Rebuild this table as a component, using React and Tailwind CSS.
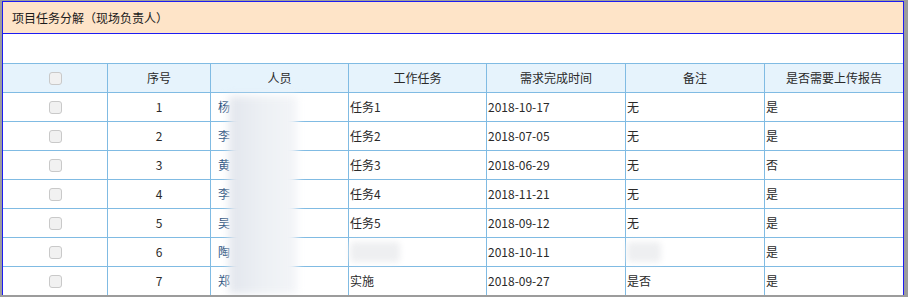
import React from 'react';

const rows = [
  { no: 1, name: '杨', task: '任务1', date: '2018-10-17', note: '无', report: '是' },
  { no: 2, name: '李', task: '任务2', date: '2018-07-05', note: '无', report: '是' },
  { no: 3, name: '黄', task: '任务3', date: '2018-06-29', note: '无', report: '否' },
  { no: 4, name: '李', task: '任务4', date: '2018-11-21', note: '无', report: '是' },
  { no: 5, name: '吴', task: '任务5', date: '2018-09-12', note: '无', report: '是' },
  { no: 6, name: '陶', task: null, date: '2018-10-11', note: null, report: '是' },
  { no: 7, name: '郑', task: '实施', date: '2018-09-27', note: '是否', report: '是' },
];

const headers = ['序号', '人员', '工作任务', '需求完成时间', '备注', '是否需要上传报告'];

const Checkbox = () => (
  <span className="inline-block w-[13px] h-[13px] rounded-[3px] border border-[#c9c9c9] bg-[#f1f1f1]" />
);

// smudge used where the original screenshot was blurred out
const Smudge = ({ w }) => (
  <span className="inline-block h-[20px] rounded-sm bg-[#eeeff1] blur-[3px]" style={{ width: w }} />
);

const cell = 'h-[29px] border-r border-b border-[#80bbe3] flex items-center';

export default function App() {
  return (
    <div className="w-full h-[297px] bg-[#9c9c9c] pt-px pl-[2px] pr-[4px] pb-[2px] flex font-['Noto_Sans_CJK_SC',sans-serif] text-[12px] text-[#2a2a2a]">
      <div className="flex-1 relative overflow-hidden border-x border-t border-[#1c1cf2] bg-white">
        {/* title bar */}
        <div className="h-[32px] bg-[#fee4c8] border-b border-[#1c1cf2] flex items-center pl-[9px] text-[12px] text-[#1a1a1a]">
          项目任务分解（现场负责人）
        </div>

        <div className="h-[29px]" />

        {/* table */}
        <div className="grid grid-cols-[105px_103px_138px_138px_139px_139px_138px] border-t border-[#80bbe3]">
          <div className={`${cell} bg-[#e6f3fc] justify-center`}>
            <Checkbox />
          </div>
          {headers.map((h, i) => (
            <div
              key={h}
              className={`${cell} bg-[#e6f3fc] justify-center ${i === headers.length - 1 ? 'border-r-0' : ''}`}
            >
              {h}
            </div>
          ))}

          {rows.map(r => (
            <React.Fragment key={r.no}>
              <div className={`${cell} justify-center`}>
                <Checkbox />
              </div>
              <div className={`${cell} justify-center`}>{r.no}</div>
              <div className={`${cell} pl-[7px] text-[#1f4f80]`}>{r.name}</div>
              <div className={`${cell} pl-px`}>{r.task ?? <Smudge w={50} />}</div>
              <div className={`${cell} pl-px`}>{r.date}</div>
              <div className={`${cell} pl-px`}>{r.note ?? <Smudge w={34} />}</div>
              <div className={`${cell} pl-px border-r-0`}>{r.report}</div>
            </React.Fragment>
          ))}
        </div>

        {/* blurred names */}
        <div className="absolute left-[226px] top-[94px] w-[68px] h-[198px] bg-gradient-to-r from-[#e2e6ed] via-[#edf0f4] to-[#f3f5f8] blur-[4px]" />
      </div>
    </div>
  );
}
